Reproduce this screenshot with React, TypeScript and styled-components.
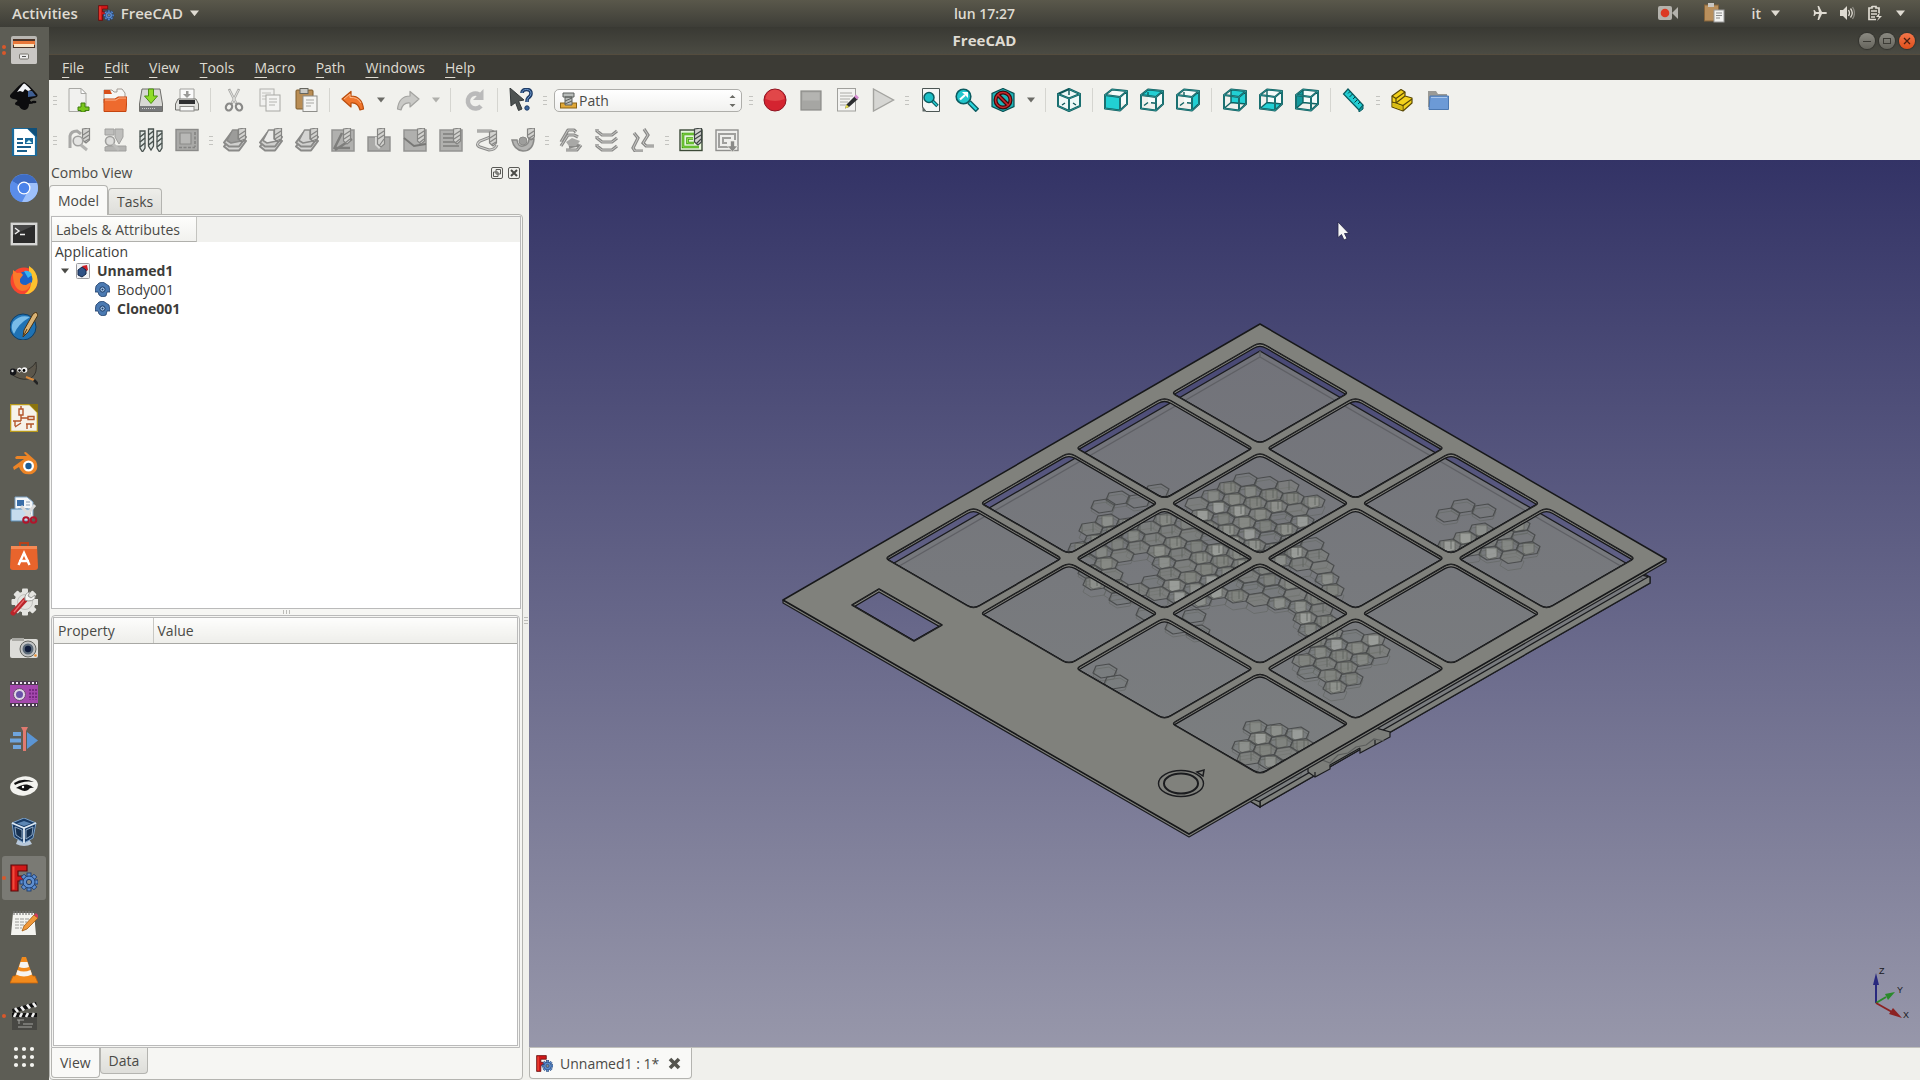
import React from "react";
import styled, { createGlobalStyle, css } from "styled-components";

const Global = createGlobalStyle`
  * { box-sizing: border-box; }
  html, body { margin: 0; padding: 0; height: 100%; }
  body {
    font-family: "Open Sans", "Noto Sans", sans-serif;
    font-size: 14px;
    line-height: 19px;
    color: #4a4a46;
    overflow: hidden;
  }
  button, select { font: inherit; color: inherit; }
  button { border: 0; padding: 0; background: none; }
`;

/* ---------- desktop shell ---------- */

const Desktop = styled.div`
  display: flex;
  flex-direction: column;
  height: 100vh;
  background: #f0f0ec;
`;

const TopBar = styled.header`
  display: grid;
  grid-template-columns: 49px 1fr auto 1fr;
  align-items: center;
  flex: none;
  height: 27px;
  padding-bottom: 1px;
  background: linear-gradient(#5a584b, #3d3d37);
  color: #dfdbd2;
`;

const TopLeft = styled.div`
  grid-column: 1 / 3;
  display: flex;
  align-items: center;
  gap: 20px;
  padding-left: 12px;
`;

const TopRight = styled.div`
  display: flex;
  align-items: center;
  justify-content: flex-end;
  padding-right: 15px;
`;

const TopItem = styled.button<{ $gap?: number; $right?: number; $large?: boolean }>`
  display: flex;
  align-items: center;
  gap: ${(p) => p.$gap ?? 7}px;
  margin-right: ${(p) => p.$right ?? 0}px;
  font-size: ${(p) => (p.$large ? 15 : 14)}px;
  font-weight: 600;
`;

const Main = styled.div`
  display: flex;
  flex: 1;
  min-height: 0;
`;

const Dock = styled.nav`
  display: flex;
  flex-direction: column;
  flex: none;
  width: 49px;
  background: #5d5d55;
`;

const DockItem = styled.button<{ $active?: boolean; $dots?: number }>`
  position: relative;
  display: flex;
  align-items: center;
  justify-content: center;
  flex: none;
  width: 44px;
  height: 44px;
  margin: 1px 3px 1px 2px;
  border-radius: 3px;
  background: ${(p) => (p.$active ? "#7a7a74" : "none")};
  &:last-child { height: 34px; }
  ${(p) =>
    p.$dots &&
    css`
      &::before {
        content: "";
        position: absolute;
        left: 0;
        top: ${p.$dots === 2 ? 17 : 20}px;
        width: 4px;
        height: 4px;
        border-radius: 2px;
        background: #d9582b;
        box-shadow: ${p.$dots === 2 ? "0 6px 0 #d9582b" : "none"};
      }
    `}
`;

const AppWindow = styled.div`
  display: flex;
  flex-direction: column;
  flex: 1;
  min-width: 0;
`;

const TitleBar = styled.div`
  display: grid;
  grid-template-columns: 1fr auto 1fr;
  align-items: center;
  flex: none;
  height: 28px;
  border-bottom: 1px solid #544c3e;
  background: linear-gradient(#393933, #4b4b43);
  color: #dfdbd2;
  font-size: 15px;
  font-weight: 700;
`;

const WindowButtons = styled.div`
  grid-column: 3;
  display: flex;
  justify-content: flex-end;
  gap: 4px;
  padding-right: 5px;
`;

const RoundButton = styled.button<{ $close?: boolean }>`
  display: flex;
  width: 16px;
  height: 16px;
  border-radius: 8px;
  background: ${(p) => (p.$close ? "linear-gradient(#f4764a, #df4f1b)" : "linear-gradient(#8b8a82, #66655d)")};
  box-shadow: 0 0 1px 1px #33332e;
`;

const MenuBar = styled.nav`
  display: flex;
  flex: none;
  height: 25px;
  padding-left: 3px;
  background: #3c3b35;
  color: #dfdbd2;
`;

const MenuButton = styled.button`
  padding: 0 10px;
  text-align: left;
`;

const Mnemonic = styled.u`
  text-underline-offset: 4px;
  text-decoration-thickness: 1px;
`;

const Tools = styled.div`
  flex: none;
  background: #f1f1ed;
`;

const ToolRow = styled.div`
  display: flex;
  align-items: center;
  height: 40px;
`;

const ToolButton = styled.button`
  display: flex;
  align-items: center;
  justify-content: center;
  flex: none;
  width: 36px;
  height: 36px;
`;

const DropButton = styled(ToolButton)`
  width: 19px;
`;

const Sep = styled.span`
  flex: none;
  width: 1px;
  height: 24px;
  margin: 0 5px;
  background: #d5d5d0;
`;

const Handle = styled.span`
  flex: none;
  width: 4px;
  height: 9px;
  margin: 0 4px;
  background: repeating-linear-gradient(#c4c4c0 0 1px, transparent 1px 4px);
`;

const Picker = styled.div`
  position: relative;
  display: flex;
  align-items: center;
  width: 188px;
  height: 23px;
  margin: 0 3px;
  border: 1px solid #aeaeaa;
  border-radius: 5px;
  background: linear-gradient(#ffffff, #f1f1ef);
  color: #4a4a46;
`;

const PickerIcon = styled.span`
  position: absolute;
  left: 5px;
  top: 2px;
  display: flex;
  pointer-events: none;
`;

const PickerArrows = styled(PickerIcon)`
  left: auto;
  right: 5px;
  top: 4px;
`;

const PickerSelect = styled.select`
  appearance: none;
  width: 100%;
  height: 100%;
  padding: 0 24px;
  border: 0;
  background: transparent;
`;

const Work = styled.div`
  display: flex;
  flex: 1;
  min-height: 0;
`;

/* ---------- combo view ---------- */

const Combo = styled.aside`
  display: flex;
  flex-direction: column;
  flex: none;
  width: 474px;
`;

const ComboTitle = styled.div`
  display: flex;
  align-items: center;
  height: 25px;
  padding: 0 3px 0 2px;
  flex: none;
`;

const Grow = styled.span`
  flex: 1;
`;

const MiniButton = styled.button`
  display: flex;
  margin-left: 5px;
`;

const Tabs = styled.div<{ $bottom?: boolean }>`
  display: flex;
  flex: none;
  align-items: ${(p) => (p.$bottom ? "flex-start" : "flex-end")};
  height: ${(p) => (p.$bottom ? 30 : 29)}px;
`;

const Tab = styled.button<{ $on?: boolean; $bottom?: boolean }>`
  height: ${(p) => (p.$on ? 30 : 26)}px;
  padding: 0 8px;
  border: 1px solid #b4b4b0;
  background: ${(p) => (p.$on ? "#f9f9f7" : "linear-gradient(#eeeeea, #dededa)")};
  ${(p) =>
    p.$bottom
      ? css`
          border-top: 0;
          border-radius: 0 0 4px 4px;
        `
      : css`
          border-bottom: 0;
          border-radius: 4px 4px 0 0;
        `}
  position: relative;
  margin-bottom: ${(p) => (p.$on && !p.$bottom ? -1 : 0)}px;
`;

const Pane = styled.div`
  display: flex;
  flex-direction: column;
  flex: 1;
  min-height: 0;
  border: 1px solid #b4b4b0;
  border-radius: 0 4px 4px 4px;
  background: #f6f6f3;
  padding: 1px;
`;

const Tree = styled.div`
  flex: none;
  height: 45.6%;
  border: 1px solid #bababa;
  background: #fff;
`;

const TreeHeader = styled.div`
  display: flex;
  height: 25px;
  background: #f1f1ee;
`;

const TreeHeading = styled.span`
  padding: 3px 16px 0 4px;
  border-right: 1px solid #c4c4c0;
  border-bottom: 1px solid #b0b0ac;
  background: linear-gradient(#fdfdfc, #f1f1ee);
`;

const TreeList = styled.ul`
  margin: 0;
  padding: 0 0 0 3px;
  list-style: none;
`;

const TreeRow = styled.li<{ $level: number; $bold?: boolean }>`
  display: flex;
  align-items: center;
  gap: 7px;
  height: 19px;
  padding-left: ${(p) => p.$level}px;
  font-weight: ${(p) => (p.$bold ? 700 : 400)};
  color: #3d3d3a;
`;

const Splitter = styled.div`
  flex: none;
  align-self: center;
  width: 7px;
  height: 4px;
  margin: 1px 0;
  background: repeating-linear-gradient(90deg, #bdbdb9 0 1px, transparent 1px 3px);
`;

const Props = styled.div`
  flex: 1;
  min-height: 0;
  padding: 1px;
  border: 1px solid #bababa;
  border-radius: 4px 4px 0 0;
  margin-right: 1px;
`;

const PropsInner = styled.div`
  height: 100%;
  border: 1px solid #bababa;
  background: #fff;
`;

const PropTable = styled.table`
  width: 100%;
  border-collapse: collapse;
  table-layout: fixed;
`;

const Th = styled.th<{ $w?: number }>`
  width: ${(p) => (p.$w ? `${p.$w}px` : "auto")};
  height: 25px;
  padding: 0 4px;
  text-align: left;
  font-weight: 400;
  border-bottom: 1px solid #a8a8a4;
  background: linear-gradient(#fdfdfc, #eeeeea);
  & + & { border-left: 1px solid #c8c8c4; }
`;

const VSplitter = styled.div`
  display: flex;
  align-items: center;
  flex: none;
  width: 6px;
  &::before {
    content: "";
    width: 4px;
    height: 7px;
    margin-left: 1px;
    background: repeating-linear-gradient(#bdbdb9 0 1px, transparent 1px 3px);
  }
`;

/* ---------- 3D view ---------- */

const Mdi = styled.main`
  display: flex;
  flex-direction: column;
  flex: 1;
  min-width: 0;
`;

const View3D = styled.div`
  position: relative;
  flex: 1;
  min-height: 0;
  background: linear-gradient(#333366, #9797aa);
`;

const Scene = styled.svg`
  display: block;
  width: 100%;
  height: 100%;
`;

const AxisCross = styled.svg`
  position: absolute;
  right: 0;
  bottom: 17px;
`;

const MdiTabs = styled.div`
  display: flex;
  flex: none;
  height: 33px;
  padding-bottom: 1px;
  border-top: 1px solid #c0c0bc;
`;

const MdiTab = styled.div`
  display: flex;
  align-items: center;
  gap: 9px;
  padding: 0 10px 0 6px;
  border: 1px solid #b4b4b0;
  border-top: 0;
  border-radius: 0 0 4px 4px;
  background: #f9f9f7;
`;

const PlainButton = styled.button`
  display: flex;
  align-items: center;
  gap: 7px;
`;

/* ---------- icons ---------- */

const FreeCadMark = ({ size }: { size: number }) => (
  <svg width={size} height={size} viewBox="0 0 28 28">
    <path d="M1 1h16v6H8v5h7v5H8v10H1z" fill="#d01818" stroke="#5c0a0a" strokeWidth="1.2" />
    <path d="M2.500 2.500h2v23h-2z" fill="#f04a3a" />
    <g transform="translate(19 18)">
      {[0, 45, 90, 135, 180, 225, 270, 315].map((a) => (
        <rect key={a} x="-2" y="-9" width="4" height="5" fill="#5e8fd0" stroke="#1c3c70" strokeWidth="0.900" transform={`rotate(${a})`} />
      ))}
      <circle r="6" fill="#5e8fd0" stroke="#1c3c70" strokeWidth="1" />
      <circle r="5" fill="#5e8fd0" />
      <circle r="2.600" fill="#8a8a84" stroke="#1c3c70" strokeWidth="1" />
    </g>
  </svg>
);

const dockArt: Record<string, React.ReactNode> = {
  Files: (
    <>
      <rect x="1" y="0" width="26" height="28" rx="2" fill="#b9b7b3" />
      <rect x="3" y="3" width="22" height="9" fill="#4b3428" />
      <path d="M3 5h22v4H3z" fill="#e8783a" />
      <path d="M4 8h20v3H4z" fill="#fbe4c4" />
      <rect x="1" y="12" width="26" height="16" rx="2" fill="#c9c7c4" />
      <rect x="9.500" y="18" width="9" height="5" rx="1" fill="#ededed" stroke="#77756f" />
      <path d="M12 20.500h4" stroke="#555" />
    </>
  ),
  Inkscape: (
    <>
      <path d="M14 0Q17 1 27 12Q29 15 24 16Q17 18 22 20Q25 22 19 22Q19 27 15 28Q11 28 9 24Q3 23 6 20Q10 18 3 17Q-2 15 1 12Q11 1 14 0z" fill="#0c0c0e" />
      <path d="M14 1.500Q16 2 21 8L18 9L15 7L13 10L10 9L7 10Q12 3 14 1.500z" fill="#f2f4f8" />
      <path d="M18 9l4 0l4 5l-8 1z" fill="#3f5f93" />
      <ellipse cx="24" cy="20" rx="2.500" ry="1.300" fill="#0c0c0e" />
    </>
  ),
  Writer: (
    <>
      <path d="M3 0h15l8 8v20H3z" fill="#fff" stroke="#1a6a9c" strokeWidth="2.200" />
      <path d="M17 0h10v9z" fill="#10507a" />
      <path d="M7 11h6M7 15h6M7 19h14M7 23h10" stroke="#1a5f8c" strokeWidth="1.800" />
      <rect x="15" y="10" width="8" height="6" fill="#1a6a9c" />
      <path d="M16 15l3-3l3 3z" fill="#dff" />
    </>
  ),
  Chromium: (
    <>
      <circle cx="14" cy="14" r="14" fill="#6d9cf0" />
      <path d="M14 14L2 7A14 14 0 0 1 27 9H14z" fill="#3e6cc4" />
      <path d="M14 14L2 7A14 14 0 0 0 12 28L17 19z" fill="#5a8dea" />
      <path d="M27 9A14 14 0 0 1 12 28L18 17L17 9z" fill="#9dc0fb" />
      <circle cx="14" cy="14" r="6.500" fill="#fff" />
      <circle cx="14" cy="14" r="5.200" fill="#4a83ea" />
    </>
  ),
  Terminal: (
    <>
      <rect x="0.500" y="2.500" width="27" height="23" rx="1" fill="#d6d6d4" stroke="#8c8c88" />
      <rect x="3" y="5" width="22" height="18" fill="#2b2b2b" />
      <path d="M3 5h22L3 15z" fill="#484848" />
      <path d="M5 8l4 3l-4 3M10 14.500h5" stroke="#eee" strokeWidth="1.400" fill="none" />
    </>
  ),
  Firefox: (
    <>
      <circle cx="14" cy="15" r="13.500" fill="#f8452f" />
      <path d="M19 0Q27 5 27.500 14A13.500 13.500 0 0 1 14 28.500Q24 22 19 12z" fill="#fdc22e" />
      <path d="M4 6Q7 8 11 7L14 12L8 22Q3 16 4 6z" fill="#e8304c" />
      <circle cx="15" cy="13" r="7.500" fill="#1d63c8" />
      <path d="M14 5Q20 4 22 9L18 12z" fill="#39b4f0" />
      <path d="M3 4l4 3Q12 6 13 9L10 13Q9 19 16 19L21 16Q20 25 12 25Q2 23 3 4z" fill="#fa7a2a" />
    </>
  ),
  Editor: (
    <>
      <circle cx="13" cy="15" r="13" fill="#1f72b4" stroke="#0f3e66" />
      <path d="M3 10Q10 2 20 5Q8 12 4 22Q0 16 3 10z" fill="#79bce8" />
      <path d="M26 0L28 3L18 20L13 25L14 18L23 2z" fill="#d9b274" stroke="#4a3314" strokeWidth="1" />
      <path d="M14 23l3-6" stroke="#4a3314" />
    </>
  ),
  Gimp: (
    <>
      <path d="M9 9Q14 13 19 11Q24 8 26 4Q28 16 21 20Q14 23 6 19Q2 18 2 14Q6 13 9 9z" fill="#5b564b" stroke="#2c2a25" strokeWidth="0.800" />
      <circle cx="3" cy="14" r="3.400" fill="#15161a" />
      <circle cx="2.500" cy="13" r="1.200" fill="#ddd" />
      <circle cx="9.500" cy="12" r="2.400" fill="#f4f4f4" />
      <circle cx="14.500" cy="12" r="2.800" fill="#f4f4f4" />
      <circle cx="9.500" cy="12.500" r="1.200" />
      <circle cx="14" cy="12.500" r="1.400" />
      <path d="M16 19l8 3" stroke="#d98a3c" strokeWidth="2" />
      <path d="M24 22l4 4" stroke="#222" strokeWidth="2.600" />
    </>
  ),
  Schematic: (
    <>
      <path d="M0 0h20l8 8v20H0z" fill="#f6f3ea" stroke="#b99a1c" strokeWidth="2.600" />
      <path d="M19 0h10v10z" fill="#8a7410" />
      <path d="M11 2v3M9 5h4v6H9zM11 11v6M11 14h7M18 12.500h6v3h-6zM3 17h8M5 17v5M11 19l-6 4M16 20h8M17 20v5M21 20v4" stroke="#b4562a" strokeWidth="1.400" fill="none" />
    </>
  ),
  Blender: (
    <>
      <path d="M3 17L14 9H6Q4 7 7 6H17L14 3Q15 1 17 3L26 11Q30 20 22 24Q12 26 9 17L4 20z" fill="#ec8426" />
      <circle cx="18.500" cy="16" r="5.500" fill="#fff" />
      <circle cx="18.500" cy="16" r="3.200" fill="#1d5c94" />
    </>
  ),
  Scanner: (
    <>
      <path d="M5 1h12l6 5v16H5z" fill="#f4f7fa" stroke="#7fa3c4" />
      <path d="M7 4h7v6H7z" fill="#3a6ea8" />
      <path d="M16 6h4M16 9h4M8 13h10" stroke="#8a9db0" />
      <path d="M1 13h19v12H1z" fill="#c6dcee" stroke="#5d8fb8" />
      <path d="M11 10L22 22M25 9L14 22" stroke="#dadada" strokeWidth="3" />
      <circle cx="16" cy="24" r="2.800" fill="none" stroke="#b0152c" strokeWidth="2" />
      <circle cx="23.500" cy="24" r="2.800" fill="none" stroke="#b0152c" strokeWidth="2" />
    </>
  ),
  Software: (
    <>
      <path d="M10 5V1h8v4" fill="none" stroke="#b5411a" strokeWidth="2" />
      <path d="M1 4h26l1 21q0 3-3 3H3q-3 0-3-3z" fill="#e8642c" />
      <path d="M1 4h26v3H1z" fill="#f58a55" />
      <path d="M8.500 23L14 11l5.500 12M9 19h10" stroke="#fff" strokeWidth="2.400" fill="none" />
    </>
  ),
  Settings: (
    <>
      <g transform="translate(15 14)">
        {[0, 45, 90, 135].map((a) => (
          <rect key={a} x="-3" y="-13.500" width="6" height="27" rx="1" fill="#e4e4e0" transform={`rotate(${a})`} />
        ))}
        <circle r="10.500" fill="#e4e4e0" />
        <circle r="7.500" fill="none" stroke="#c2c2be" />
      </g>
      <path d="M3 25L15 12" stroke="#b9242a" strokeWidth="5" strokeLinecap="round" />
      <path d="M4 24L14 12" stroke="#e8686a" strokeWidth="1.400" />
      <path d="M15 12Q14 5 20 4L18 8L21 10L25 7Q26 13 18 13z" fill="#f6f6f4" stroke="#9a9a96" />
    </>
  ),
  Camera: (
    <>
      <rect x="0" y="5" width="28" height="19" rx="2" fill="#dcdcd8" />
      <rect x="2" y="4" width="12" height="3" fill="#a9a9a4" />
      <circle cx="18" cy="15" r="8" fill="#c2c4c5" stroke="#62645f" />
      <circle cx="18" cy="15" r="5.500" fill="#5b6a78" />
      <circle cx="18" cy="15" r="3.200" fill="#0f1c3a" />
      <circle cx="25.500" cy="21.500" r="1.300" fill="#f09030" />
    </>
  ),
  Screencast: (
    <>
      <rect x="0" y="1" width="28" height="26" rx="1" fill="#a548ae" />
      <path d="M0 1h28v4H0zM0 23h28v4H0z" fill="#4a3a4e" />
      <path d="M2 3h25M2 25h25" stroke="#f0e6f2" strokeWidth="2" strokeDasharray="2 2" />
      <circle cx="9.500" cy="14.500" r="6" fill="#e0d6e4" stroke="#6b4a72" />
      <circle cx="9.500" cy="14.500" r="3.500" fill="#6a52a8" />
      <path d="M20 9v11M23 9v11M26 9v11" stroke="#74267e" strokeWidth="1.800" strokeDasharray="2 1.500" />
    </>
  ),
  VideoCutter: (
    <>
      <path d="M3 8h8M0 14.500h11M3 21h8" stroke="#6fa4dc" strokeWidth="4" />
      <path d="M17 6L28 14.500L17 23z" fill="#5b95d4" />
      <path d="M11 1h7l-2 4v20h-3V5z" fill="#e07a70" />
    </>
  ),
  Viewer: (
    <>
      <ellipse cx="14" cy="14" rx="14" ry="9.500" fill="#f2f2ee" transform="rotate(-8 14 14)" />
      <path d="M4 11Q13 5 24 10Q14 8 5 13z" fill="#111" />
      <path d="M6 16Q12 12 17 12.500Q21 13 24 16Q20 15 18 18Q14 20 10 17.500Q8 16 6 16z" fill="#111" />
      <circle cx="13" cy="15" r="1.200" fill="#fff" />
    </>
  ),
  VirtualBox: (
    <>
      <path d="M8 21h11l3 5q-8 4-16 0z" fill="#b8c8da" />
      <path d="M14 0L26 5L23 20L14 25L4 19L2 5z" fill="#1a3c66" stroke="#7aa0c8" strokeWidth="1" />
      <path d="M2 5l12 5L26 5M14 10v15" stroke="#dfeaf4" strokeWidth="1.800" fill="none" />
      <path d="M14 3l7 2.500L14 8L7 5.500z" fill="#5d87b4" />
      <path d="M5 9l7 3v9l-6-4zM23 9l-7 3v9l6-4z" fill="#16304f" stroke="#a8c2dc" strokeWidth="0.800" />
    </>
  ),
  TextEditor: (
    <>
      <path d="M3 3h21l2 22H1z" fill="#f4f4f0" />
      <path d="M4 1v4M7 1v4M10 1v4M13 1v4M16 1v4M19 1v4M22 1v4" stroke="#777" strokeWidth="1.200" />
      <path d="M5 9h14M5 12h12M5 15h9M5 18h7" stroke="#9a9a96" strokeDasharray="4 1" />
      <path d="M24 5L28 8L17 19L12 21L14 16z" fill="#f0983a" stroke="#a05a10" strokeWidth="0.800" />
      <path d="M24 5l4 3l1-2l-3-3z" fill="#d23a5a" />
    </>
  ),
  Vlc: (
    <>
      <path d="M3 20h22l3 7H0z" fill="#f28a1c" stroke="#c8640a" strokeWidth="0.800" />
      <path d="M12 1h4l7 20q-9 5-18 0z" fill="#f28a1c" />
      <path d="M10.500 6h7l1.500 5q-5 2-10 0zM7.500 14q6 3 13 0l1.500 4.500q-8 4-16 0z" fill="#f6f4f0" />
    </>
  ),
  Clapper: (
    <>
      <rect x="2" y="11" width="25" height="17" fill="#484844" />
      <path d="M2 7L26 0l1 4L3 11z" fill="#111" />
      <path d="M5 6l3 4M11 4.500l3 4M17 2.500l3 4M23 1l3 4" stroke="#f2f2f2" strokeWidth="2.600" />
      <path d="M2 11h25v4H2z" fill="#111" />
      <path d="M6 11l-2 4M12 11l-2 4M18 11l-2 4M24 11l-2 4" stroke="#f2f2f2" strokeWidth="2.600" />
      <path d="M7 18h7M9 18v4M13 22h10M8 25h14" stroke="#b0b0ac" strokeWidth="0.900" />
    </>
  ),
  Apps: (
    <>
      {[6, 14, 22].map((y) => [6, 14, 22].map((x) => <circle key={`${x}-${y}`} cx={x} cy={y} r="2.100" fill="#f4f4f0" />))}
    </>
  ),
};

const I = ({ children, size = 24 }: { children: React.ReactNode; size?: number }) => (
  <svg width={size} height={size} viewBox="0 0 24 24" fill="none" aria-hidden="true">
    {children}
  </svg>
);

const Down = ({ color = "#6b6b66", w = 8 }: { color?: string; w?: number }) => (
  <svg width={w} height={(w * 6) / 8} viewBox="0 0 8 6" aria-hidden="true">
    <path d="M0 0.500h8L4 5.500z" fill={color} />
  </svg>
);

const faces: Record<string, string> = {
  front: "M1 7L16 9V22.500L1 20.500Z",
  top: "M1 7L8 1.500L23 3L16 9Z",
  right: "M16 9L23 3V16L16 22.500Z",
  rear: "M8 1.500L23 3V16L8 14.500Z",
  bottom: "M1 20.500L8 14.500L23 16L16 22.500Z",
  left: "M1 7L8 1.500V14.500L1 20.500Z",
};

const Cube = ({ face }: { face: string }) => {
  const hidden = ["rear", "bottom", "left"].includes(face);
  const lines = "M1 7L16 9V22.500L1 20.500ZM1 7L8 1.500L23 3L16 9M23 3V16L16 22.500";
  return (
    <I>
      <path d={faces.rear} fill="#f4fbfa" />
      <path d={faces[face]} fill={face === "left" ? "#149a9e" : "#22d0d4"} />
      {face !== "front" && (
        <path d={hidden ? "M8 1.500V14.500L1 20.500M8 14.500L23 16" : "M8 4v4M8 14.500l-4 3M11 14.700l5 0.500"} stroke="#0e6262" strokeWidth="1.400" />
      )}
      <path d={lines} stroke="#0b5658" strokeWidth="2" strokeLinejoin="round" />
      <path d={lines} stroke="#3fb0ae" strokeWidth="0.600" />
    </I>
  );
};

const Bit = ({ x = 14, y = 0, h = 15, dark }: { x?: number; y?: number; h?: number; dark?: boolean }) => {
  const ink = dark ? "#3e4644" : "#858583";
  return (
    <g transform={`translate(${x} ${y})`}>
      <path d={`M0.500 1L7.500 0V${h - 3}L4 ${h}L0.500 ${h - 3}Z`} fill="#d2d2cf" stroke={ink} strokeWidth="1.200" />
      <path d={`M1 7L7 3M1 11L7 7M2 ${h - 1}L7 11`} stroke={ink} strokeWidth="1.200" />
    </g>
  );
};

const G = "#8a8a88";
const Slabs = ({ fill }: { fill: string }) => (
  <I>
    <path d="M1 18.500L8 9L23 13L16 22.500H6Z" fill="#d6d6d4" stroke={G} strokeWidth="2" strokeLinejoin="round" />
    <path d="M1 14.500L8 5L23 9L16 18.500H6Z" fill="#d0d0ce" stroke={G} strokeWidth="2" strokeLinejoin="round" />
    <path d="M4 12.500L9.500 2H15V11L18 13L8 15Z" fill={fill} stroke={G} strokeWidth="1.500" strokeLinejoin="round" />
    <Bit x={15} h={14} />
  </I>
);
const Block = ({ children, x = 14 }: { children: React.ReactNode; x?: number }) => (
  <I>
    <rect x="1" y="2" width="22" height="21" fill="#b0b0ae" stroke="#949492" strokeWidth="1.500" />
    {children}
    <Bit x={x} h={16} />
  </I>
);

const icons: Record<string, React.ReactNode> = {
  New: (
    <I>
      <path d="M2 0.500h12l5 5v18H2z" fill="#f1f1ef" stroke="#a8a8a4" />
      <path d="M14 0.500v5h5z" fill="#fff" stroke="#a8a8a4" />
      <path d="M14 15h4v4h4v3.500h-4V24h-4v-1.500h-3V19h3z" fill="#7ac61c" stroke="#3f7d0c" />
    </I>
  ),
  Open: (
    <I>
      <path d="M1 2h8l2 2h3V1h5l3 4v10H1z" fill="#f6f6f4" stroke="#a29b94" />
      <path d="M1 2h6l2 4H1z" fill="#d8501a" />
      <path d="M1 11h11l3-2h9l-1 14.500H1z" fill="#ee6a2e" stroke="#c5450f" />
      <path d="M2 12h11l3-2h7" stroke="#fbb48c" />
    </I>
  ),
  Save: (
    <I>
      <path d="M3 1h18l2.500 15v7.500H0.500V16z" fill="#d8d8d4" stroke="#6e6e6a" />
      <path d="M1 18h22v5H1z" fill="#77787a" />
      <path d="M3 20.500h14" stroke="#ccc" strokeDasharray="1 1" />
      <path d="M9.500 1h5v7h4L12 15.500L5.500 8h4z" fill="#8fdc28" stroke="#4a9010" />
    </I>
  ),
  Print: (
    <I>
      <path d="M5 1h14v11H5z" fill="#fafafa" stroke="#a0a09c" />
      <path d="M11 3h2.500v3h2.500l-4 4l-4-4h3z" fill="#9a9a98" />
      <path d="M3 11h18l2.500 5v6h-23v-6z" fill="#e2e2df" stroke="#70706c" />
      <rect x="4" y="12" width="16" height="4" fill="#2e2f31" />
      <rect x="5" y="18.500" width="14" height="4.500" fill="#f8f8f8" stroke="#8b8b88" />
    </I>
  ),
  Cut: (
    <I>
      <path d="M7 1L14.500 16M17 1L9.500 16" stroke="#a8a8a5" strokeWidth="2.600" />
      <path d="M7.500 2L14 15M16.500 2L10 15" stroke="#e4e4e1" strokeWidth="1" />
      <ellipse cx="7" cy="19" rx="3" ry="3.600" stroke="#8a8a88" strokeWidth="2.200" transform="rotate(25 7 19)" />
      <ellipse cx="17" cy="19" rx="3" ry="3.600" stroke="#8a8a88" strokeWidth="2.200" transform="rotate(-25 17 19)" />
    </I>
  ),
  Copy: (
    <I>
      <rect x="2" y="1" width="14" height="17" fill="#f1f1ef" stroke="#b0b0ac" />
      <path d="M4 5h9M4 8h9M4 11h5" stroke="#c2c2be" />
      <rect x="8" y="7" width="14" height="16" fill="#f4f4f2" stroke="#a8a8a4" />
      <path d="M11 11h8M11 14h8M11 17h6" stroke="#b4b4b0" />
    </I>
  ),
  Paste: (
    <I>
      <rect x="2" y="2" width="17" height="19" rx="1" fill="#b98d54" stroke="#7c5a2a" />
      <rect x="6" y="0.500" width="8" height="5" fill="#c9c9c5" stroke="#66665f" />
      <rect x="9" y="8" width="14" height="15.500" fill="#f4f4f2" stroke="#8e8e8a" />
      <path d="M12 12h8M12 15h8M12 18h5" stroke="#a8a8a4" />
    </I>
  ),
  Undo: (
    <I>
      <path d="M1 11L10 3.500V8Q21 8 22.500 21L19 22Q17 14 10 15V19Z" fill="#f0752c" stroke="#b84c0c" strokeWidth="1.200" strokeLinejoin="round" />
      <path d="M3 11L9 6V9.500Q17 9 20 15" stroke="#fcb98a" />
    </I>
  ),
  Redo: (
    <I>
      <path d="M23 11L14 3.500V8Q3 8 1.500 21L5 22Q7 14 14 15V19Z" fill="#c9c9c6" stroke="#a3a3a0" strokeWidth="1.200" strokeLinejoin="round" />
    </I>
  ),
  Refresh: (
    <I>
      <path d="M17 6.500A7.500 7.500 0 1 0 19 18" stroke="#bababa" strokeWidth="4.500" />
      <path d="M21.500 1v11H11z" fill="#bababa" />
    </I>
  ),
  WhatsThis: (
    <I>
      <path d="M1 0L15 12L9.500 13L13 21L9.500 22.500L6.500 14.500L2 18Z" fill="#4e5352" stroke="#34393a" />
      <path d="M13 5Q13 1.500 17.500 1.500Q22 1.500 22 5.500Q22 8 19 10Q18 11 18 14" stroke="#1f3c66" strokeWidth="3.600" />
      <path d="M13 5Q13 1.500 17.500 1.500Q22 1.500 22 5.500Q22 8 19 10Q18 11 18 14" stroke="#6d9ad0" strokeWidth="1" />
      <circle cx="18" cy="20" r="2.200" fill="#3a659c" stroke="#1f3c66" />
    </I>
  ),
  Record: (
    <I>
      <circle cx="12" cy="12" r="11" fill="#d42430" stroke="#8e1522" />
      <path d="M2.500 11A9.500 9.500 0 0 1 21.500 11Q12 15 2.500 11z" fill="#ee6a62" opacity="0.500" />
    </I>
  ),
  Stop: (
    <I>
      <rect x="2" y="3" width="20" height="19" fill="#a6a6a3" stroke="#8c8c89" strokeWidth="1.200" />
      <path d="M3.500 4.500h17v8h-17z" fill="#b4b4b1" />
    </I>
  ),
  Macros: (
    <I>
      <rect x="2.500" y="0.500" width="18" height="22.500" fill="#f3f3f1" stroke="#a0a09c" />
      <path d="M5 5h12M5 8h13M5 11h10M5 14h8M5 17h6" stroke="#aaaaa6" />
      <path d="M20 8L23 11L14 19L10 20.500L11.500 16.500Z" fill="#2c2d2f" />
      <path d="M19 8.500l2-2l3 3l-2 2z" fill="#d48ad0" />
      <path d="M10 20.500l1.500-4l2.500 2.500z" fill="#e8e04a" />
    </I>
  ),
  Play: (
    <I>
      <path d="M2.500 1L22.500 12L2.500 23Z" fill="#d6d6d3" stroke="#a4a4a0" strokeWidth="1.400" />
    </I>
  ),
  FitAll: (
    <I>
      <path d="M3.500 0.500h17v23H7l-3.500-4z" fill="#f4f6f5" stroke="#4c5654" />
      <path d="M3.500 18l4 5.500h-4z" fill="#5c6664" />
      <circle cx="10" cy="9.500" r="5" fill="#1bbfc6" stroke="#0a5b60" strokeWidth="1.500" />
      <path d="M13.500 13L18.500 18" stroke="#0a5b60" strokeWidth="3.600" />
      <path d="M14 13.500L18 17.500" stroke="#25d2d8" strokeWidth="1.400" />
    </I>
  ),
  FitSelection: (
    <I>
      <circle cx="8.500" cy="8.500" r="7.300" fill="#22c6cc" stroke="#0a5b60" strokeWidth="1.600" />
      <path d="M14 14L22.500 22.500" stroke="#0a5b60" strokeWidth="5" />
      <path d="M14.500 14.500L21.500 21.500" stroke="#2bd6dc" strokeWidth="2.400" />
      <path d="M5 11.500L10 7" stroke="#fff" strokeWidth="2.200" />
      <path d="M7 4h6v6z" fill="#fff" />
    </I>
  ),
  DrawStyle: (
    <I>
      <path d="M12 0.500L23 5.500V18.500L12 23.500L1 18.500V5.500Z" fill="#1eb4b8" stroke="#0a4f52" strokeWidth="1.200" />
      <circle cx="12" cy="12" r="7.500" stroke="#3c0a0c" strokeWidth="4" />
      <path d="M7 7L17 17" stroke="#3c0a0c" strokeWidth="4" />
      <circle cx="12" cy="12" r="7.500" stroke="#c8282c" strokeWidth="1.600" />
      <path d="M7 7L17 17" stroke="#c8282c" strokeWidth="1.600" />
    </I>
  ),
  Isometric: (
    <I>
      <path d="M12 1L23 6V18L12 23L1 18V6Z" fill="#eef8f7" stroke="#0b5658" strokeWidth="2" strokeLinejoin="round" />
      <path d="M1 6L12 10.500L23 6M12 10.500V23" stroke="#0b5658" strokeWidth="2" />
      <path d="M12 2v5M5 17l3-2M16 15l3 2" stroke="#0b5658" strokeWidth="1.400" />
      <path d="M12 1L23 6V18L12 23L1 18V6L12 10.500L23 6M12 10.500V23" stroke="#3fb0ae" strokeWidth="0.600" />
    </I>
  ),
  Measure: (
    <I>
      <path d="M6 1L21 17L17 22L1.500 6Z" fill="#22cdd2" stroke="#0a5b60" strokeWidth="1.200" />
      <path d="M21 17v4l-4 3v-2z" fill="#149a9e" stroke="#0a5b60" />
      <path d="M8 3.500l-2 2M10.500 6l-3 3M13 9l-2 2M15.500 11.500l-3 3M18 14l-2 2" stroke="#083f42" />
    </I>
  ),
  Part: (
    <I>
      <path d="M2 8L11 1.500L15 4V8L22 10V15L13 23L2 19Z" fill="#f3d21c" stroke="#5a4a06" strokeWidth="1.200" strokeLinejoin="round" />
      <path d="M2 8L6 10.500L15 4M6 10.500V15L2 14M6 15L15 8M6 15L13 17.500L22 11M13 17.500V23" stroke="#5a4a06" strokeWidth="1.200" />
      <path d="M2.500 15L12.500 18.500V22L2.500 18.500Z" fill="#d8bc14" />
    </I>
  ),
  Group: (
    <I>
      <path d="M2 3h8l2 3h9v13H2z" fill="#9a9a96" />
      <path d="M4 8h18.500v13.500H3z" fill="#6c9ad6" stroke="#4c78b0" />
      <path d="M5 9.500h16" stroke="#a8c6ec" />
    </I>
  ),
  Inspect: (
    <I>
      <path d="M3 20V8Q4 3 10 3L14 6" stroke="#a8a8a6" strokeWidth="3" />
      <Bit x={15} />
      <circle cx="11" cy="13" r="4.800" fill="#e4e4e2" stroke="#a0a09e" strokeWidth="1.600" />
      <path d="M14 17L20 22" stroke="#b4b4b2" strokeWidth="3" />
    </I>
  ),
  Simulator: (
    <I>
      <path d="M2 1h9v6H2zM12 1h8v8l-4 7l-4-7z" fill="#bebebc" stroke="#a0a09e" />
      <path d="M6 18h17v5H2v-4z" fill="#b4b4b2" stroke="#a0a09e" />
      <circle cx="7" cy="13" r="4.500" fill="#dededc" stroke="#a0a09e" strokeWidth="1.600" />
      <path d="M10 16l6 6" stroke="#bcbcba" strokeWidth="3" />
    </I>
  ),
  ToolLibrary: (
    <I>
      {[0.500, 9, 17.500].map((x, k) => (
        <g key={x} transform={`translate(${x} ${k === 1 ? 0 : 2})`}>
          <path d="M0.500 1h5v17l-2.500 4l-2.500-4z" fill="#dfe5e2" stroke="#49524f" strokeWidth="1.300" />
          <path d="M0.500 7l5-4M0.500 12l5-4M0.500 17l5-4" stroke="#49524f" strokeWidth="1.600" />
        </g>
      ))}
    </I>
  ),
  Job: (
    <I>
      <rect x="1" y="1.500" width="22" height="21" fill="#a9a9a7" stroke="#8b8b89" strokeWidth="1.400" />
      <path d="M5 5h11v11H5z" fill="#b8b8b6" stroke="#8b8b89" strokeWidth="1.200" />
      <path d="M20 4v15M4 19.500h16" stroke="#848482" strokeWidth="1.600" strokeDasharray="3 1.500" />
    </I>
  ),
  Profile: <Slabs fill="#9c9c9a" />,
  Pocket: <Slabs fill="#ececea" />,
  Adaptive: <Slabs fill="#d4d4d2" />,
  FaceProfile: (
    <Block x={12}>
      <path d="M3 21L11 5M5 20h14M4 22L21 11" stroke="#7e7e7c" strokeWidth="2.500" />
    </Block>
  ),
  Drilling: (
    <I>
      <path d="M1 9h22v14H1z" fill="#aaaaa8" stroke="#8f8f8d" strokeWidth="1.400" />
      <path d="M8 9h8v8l-4 4l-4-4z" fill="#d8d8d6" />
      <Bit x={10} h={19} />
    </I>
  ),
  Engrave: (
    <Block>
      <path d="M1 10L11 18L23 16" stroke="#777775" strokeWidth="1.800" />
    </Block>
  ),
  Face: (
    <Block>
      <path d="M4 6h10M4 10h10M4 14h14M4 18h16" stroke="#7e7e7c" strokeWidth="1.600" />
    </Block>
  ),
  Helix: (
    <I>
      <path d="M2 3H16Q22 4 18 8L5 13Q0 17 5 19L14 22Q20 22 22 17" stroke="#8a8a88" strokeWidth="3" />
      <path d="M2 3H16Q22 4 18 8L5 13Q0 17 5 19L14 22Q20 22 22 17" stroke="#cfcfcd" strokeWidth="1.200" />
      <Bit x={14} y={3} h={15} />
    </I>
  ),
  Surface: (
    <I>
      <path d="M1 12H6Q7 19 12 18Q18 17 18 11H23Q22 23 12 23Q3 22 1 12Z" fill="#b4b4b2" stroke={G} strokeWidth="1.500" />
      <circle cx="12" cy="13" r="4" fill="#9e9e9c" stroke={G} />
      <Bit x={16} h={12} />
    </I>
  ),
  DressupA: (
    <I>
      <path d="M2 14L9 2H15L17 4M2 18L9 7H15L19 9M7 22H18L22 17M10 19L20 17" stroke={G} strokeWidth="3.200" strokeLinejoin="round" />
      <path d="M2 14L9 2H15L17 4M2 18L9 7H15L19 9M7 22H18L22 17" stroke="#c4c4c2" strokeWidth="1" />
      <path d="M7 14L13 10L21 13L17 18L10 18Z" fill="#a8a8a6" />
    </I>
  ),
  DressupB: (
    <I>
      <path d="M2 1V3L7 7H17L22 3M2 8V10L7 14H17L22 10M2 16V18L7 22H17L22 18" stroke={G} strokeWidth="3.200" />
      <path d="M2 1V3L7 7H17L22 3M2 8V10L7 14H17L22 10M2 16V18L7 22H17L22 18" stroke="#c8c8c6" strokeWidth="1" />
    </I>
  ),
  DressupC: (
    <I>
      <path d="M3 5L7 10L2 20L4 23H12M13 1L17 7L12 15L15 18H23" stroke={G} strokeWidth="3.200" />
      <path d="M3 5L7 10L2 20L4 23H12M13 1L17 7L12 15L15 18H23" stroke="#c8c8c6" strokeWidth="1" />
    </I>
  ),
  PathJob: (
    <I>
      <rect x="1" y="2" width="22" height="20.500" fill="#e6f6da" stroke="#3c4a38" strokeWidth="1.400" />
      <path d="M20 19H4V6H15M15 15H8.500V10.500H14" stroke="#3f9a14" strokeWidth="2.600" />
      <path d="M20 19H4V6H15M15 15H8.500V10.500H14" stroke="#8fe04a" strokeWidth="1" />
      <Bit x={15} h={17} dark />
    </I>
  ),
  PathPost: (
    <I>
      <rect x="1" y="2" width="22" height="20.500" fill="#efefed" stroke="#8f8f8d" strokeWidth="1.400" />
      <path d="M14 19H4V6H20V12M12 15H8V10H16" stroke="#a0a09e" strokeWidth="2" />
      <path d="M15.500 13h4v5h3l-5 6l-5-6h3z" fill="#8a8a88" stroke="#f1f1ed" strokeWidth="0.600" />
    </I>
  ),
};

const PathIcon = () => (
  <svg width="17" height="17" viewBox="0 0 17 17" aria-hidden="true">
    <rect x="0.500" y="11" width="16" height="5" fill="#e0a838" stroke="#8a6214" />
    <path d="M3 1h11v4H3zM5 5h7v8H5z" fill="#b8bcba" stroke="#5c605e" />
    <path d="M5 9l7-3M5 12l7-3" stroke="#5c605e" />
  </svg>
);

const BodyIcon = () => (
  <svg width="15" height="15" viewBox="0 0 15 15" aria-hidden="true">
    <path d="M4 1L8 0L11 2L14 4L15 10L12 10L11 14L7 15L4 13L3 10L0 10L1 4Z" fill="#4b7ab2" stroke="#1e3e68" strokeWidth="0.800" />
    <circle cx="7.500" cy="7.500" r="2.600" fill="#a8c8ec" stroke="#1e3e68" />
    <circle cx="7.500" cy="7.500" r="1" fill="#1e3e68" />
  </svg>
);

const DocIcon = () => (
  <svg width="14" height="16" viewBox="0 0 14 16" aria-hidden="true">
    <rect x="0.500" y="0.500" width="13" height="15" rx="1" fill="#f1f2f5" stroke="#9a9a9e" />
    <path d="M6 3l5-1l1 5l-3 2z" fill="#cc1c24" />
    <path d="M2 7l4-3l4 3v4l-4 3l-4-2z" fill="#2f5286" stroke="#14284a" />
  </svg>
);

/* ---------- model ---------- */

type P = [number, number];

const holePath = (cx: number, cy: number) => {
  const w = 88;
  const h = 51;
  const c: P[] = [[cx, cy - h], [cx + w, cy], [cx, cy + h], [cx - w, cy]];
  const cut = [0.07, 0.035, 0.07, 0.035];
  const at = (a: P, b: P, t: number) => `${(a[0] + (b[0] - a[0]) * t).toFixed(1)} ${(a[1] + (b[1] - a[1]) * t).toFixed(1)}`;
  return (
    c
      .map((p, k) => {
        const prev = c[(k + 3) % 4];
        const next = c[(k + 1) % 4];
        return `${k ? "L" : "M"}${at(p, prev, cut[k])}Q${p[0]} ${p[1]} ${at(p, next, cut[k])}`;
      })
      .join("") + "Z"
  );
};

const slot = { d: "M879 589L942 625L914 641L852 605Z", below: "M879 592L942 628L914 644L852 608Z" };
const openings = [0, 1, 2, 3]
  .flatMap((i) =>
    [0, 1, 2, 3].map((j) => {
      const x = 1260 + 95.5 * (i - j);
      const y = 393 + 55.1 * (i + j);
      return { d: holePath(x, y), below: holePath(x, y + 2.6) };
    })
  )
  .concat(slot);
const plate = "M1260 324L1666 559L1189 834L783 600Z";

const regions: P[][] = [
  [[1190, 500], [1222, 482], [1245, 472], [1282, 480], [1330, 500], [1300, 530], [1332, 555], [1340, 600], [1310, 575], [1240, 560], [1170, 530], [1195, 508]],
  [[1072, 545], [1095, 522], [1165, 515], [1210, 540], [1260, 560], [1320, 595], [1345, 630], [1310, 650], [1290, 612], [1240, 602], [1190, 606], [1130, 590], [1122, 602], [1095, 588]],
  [[1300, 650], [1318, 625], [1370, 632], [1392, 642], [1362, 668], [1350, 695], [1325, 692], [1298, 668]],
  [[1228, 745], [1262, 722], [1318, 736], [1290, 768], [1245, 768]],
  [[1445, 545], [1465, 525], [1530, 525], [1532, 552], [1500, 560], [1460, 553]],
];
const cavities: P[][] = [
  [[1122, 560], [1140, 552], [1152, 572], [1150, 590], [1128, 582]],
];
const loners: P[] = [
  [1103, 506], [1118, 498], [1138, 501], [1157, 491],
  [1448, 515], [1463, 506], [1484, 511],
  [1105, 671], [1116, 682],
  [1148, 613], [1177, 627], [1194, 616], [1198, 632],
];

const inside = ([x, y]: P, poly: P[]) => {
  let hit = false;
  for (let a = 0, b = poly.length - 1; a < poly.length; b = a++) {
    const [xa, ya] = poly[a];
    const [xb, yb] = poly[b];
    if (ya > y !== yb > y && x < ((xb - xa) * (y - ya)) / (yb - ya) + xa) hit = !hit;
  }
  return hit;
};

const corner: P[] = [[9, 5], [-4, 7], [-12, 2], [-9, -5], [4, -7], [12, -2]];
const noise = (a: number, b: number) => {
  const v = Math.sin(a * 127.1 + b * 311.7) * 43758.5453;
  return v - Math.floor(v);
};

const cells: { x: number; y: number; n: number; m: number }[] = loners.map(([x, y]) => ({ x, y, n: 0.1, m: 0 }));
for (let a = -30; a < 40; a++) {
  for (let b = -40; b < 50; b++) {
    const x = 1245 + 21 * a - 16 * b;
    const y = 480 + 3.5 * a + 8 * b;
    if (regions.some((r) => inside([x, y], r)) && !cavities.some((r) => inside([x, y], r)))
      cells.push({ x, y, n: noise(a, b), m: noise(b, a + 9) });
  }
}
cells.sort((p, q) => p.y - q.y);
const hex = (x: number, y: number) => "M" + corner.map(([dx, dy]) => `${x + dx} ${y + dy}`).join("L") + "Z";
const wallShades = ["#83867f", "#8c8f88", "#979a93", "#a9aca8"];

const Model = () => (
  <Scene viewBox="529 160 1391 887" preserveAspectRatio="xMidYMid meet" role="img" aria-label="3D model">
    <defs>
      <linearGradient id="glass" x1="0" y1="0" x2="0" y2="1">
        <stop offset="0" stopColor="#72737a" />
        <stop offset="1" stopColor="#7c7f80" />
      </linearGradient>
      {openings.map((o, k) => (
        <clipPath id={`opening${k}`} key={k}>
          <path d={o.d} />
        </clipPath>
      ))}
    </defs>

    <path d="M1260 351L1650 577V583L1260 807L870 577Z" fill="url(#glass)" stroke="#1b1c1f" strokeWidth="1.300" />
    <path d="M870 583L1260 357L1650 583M1260 351V357" fill="none" stroke="#5f6065" strokeWidth="1.300" />
    {cells.map((c, k) => (
      <g key={k} strokeLinejoin="round">
        <path d={hex(c.x, c.y + (c.n > 0.5 ? 7 : 3))} fill="none" stroke="#5f625f" strokeWidth="1" opacity="0.550" />
        <path d={hex(c.x, c.y)} fill="#83867f" fillOpacity={c.n > 0.4 ? 0.45 : 0.1} />
        {c.m > 0.3 && (
          <path
            d={`M${c.x - 5} ${c.y - 5}h11v9l-8 2l-3-2z`}
            fill={wallShades[Math.floor((c.m - 0.3) * 5.7)]}
            fillOpacity="0.650"
            stroke="#62655f"
            strokeWidth="0.800"
          />
        )}
        {c.n > 0.6 && <path d={`M${c.x + 2} ${c.y - 6}v9M${c.x - 9} ${c.y - 4}v7`} fill="none" stroke="#5c5f5c" strokeWidth="0.800" />}
        <path d={hex(c.x, c.y)} fill="none" stroke="#4b4d4e" strokeWidth="1.200" />
      </g>
    ))}

    <path d="M1642 575L1650 577V583L1260 807V801L1648 577" fill="#7e807c" stroke="#1b1c1f" strokeWidth="1.300" />
    <path d="M1250 798L1260 802V807L1248 800" fill="#7e807c" stroke="#1b1c1f" strokeWidth="1.300" />
    <path d="M1360 748V753L1390 737V732L1372 727L1308 763V772L1315 777L1330 769V765L1360 748M1375 740V745M1315 772V777" fill="#7c7e7a" stroke="#1b1c1f" strokeWidth="1.200" />
    <path d="M1312 764l10-4l8 3l8-8l10-2l8-6l10-2l8-6l10 2" fill="none" stroke="#5b5d5c" strokeWidth="1.200" />

    <path d="M783 600L1189 834L1666 559V562L1189 837L783 603Z" fill="#7c7d78" stroke="#1b1c1f" strokeWidth="1.200" strokeLinejoin="round" />
    <path d={plate + openings.map((o) => o.d).join("")} fillRule="evenodd" fill="#80817c" stroke="#17181a" strokeWidth="1.500" strokeLinejoin="round" />
    {openings.map((o, k) => (
      <g key={k} clipPath={`url(#opening${k})`}>
        <path d={o.d + o.below} fill="#85857f" fillRule="evenodd" />
        <path d={o.below} fill="none" stroke="#17181a" strokeWidth="1.300" />
        <path d={o.d} fill="none" stroke="#17181a" strokeWidth="1.500" />
      </g>
    ))}

    <g fill="none" stroke="#1b1c1f">
      <ellipse cx="1181" cy="783.500" rx="22.500" ry="13" strokeWidth="1.400" />
      <ellipse cx="1181" cy="783.500" rx="17" ry="10" strokeWidth="2" />
      <path d="M1197 772L1204 770L1203 776Z" strokeWidth="1.500" />
    </g>

    <path d="M1338 222V237.500L1341.500 234.500L1344 240L1347 238.500L1344.500 233.500H1349Z" fill="#f6f6f6" stroke="#26264a" strokeWidth="0.800" />
  </Scene>
);

const Axes = () => (
  <AxisCross width="60" height="70" viewBox="1860 960 60 70" role="img" aria-label="Axis cross">
    <path d="M1876 1003V984" stroke="#28287e" strokeWidth="2" />
    <path d="M1876 973L1879 985H1873Z" fill="#28287e" />
    <path d="M1876 1003L1886 997" stroke="#2a8a2a" strokeWidth="2" />
    <path d="M1895 992L1885 994L1888 1000Z" fill="#2a8a2a" />
    <path d="M1876 1003L1892 1012" stroke="#8c2222" strokeWidth="2" />
    <path d="M1902 1018L1889 1014L1893 1008Z" fill="#8c2222" />
    <g fill="#18181c" fontFamily="Liberation Sans, sans-serif" fontSize="9">
      <text x="1879" y="974">Z</text>
      <text x="1897" y="993">Y</text>
      <text x="1903" y="1018">X</text>
    </g>
  </AxisCross>
);

/* ---------- data ---------- */

const menus = ["File", "Edit", "View", "Tools", "Macro", "Path", "Windows", "Help"];

const dockItems: [string, number?][] = [
  ["Files", 2], ["Inkscape"], ["Writer"], ["Chromium"], ["Terminal"], ["Firefox"], ["Editor"], ["Gimp"],
  ["Schematic"], ["Blender"], ["Scanner"], ["Software"], ["Settings"], ["Camera"], ["Screencast"],
  ["VideoCutter"], ["Viewer"], ["VirtualBox"], ["FreeCAD", 1], ["TextEditor"], ["Vlc"], ["Clapper", 1], ["Apps"],
];

const rowOneA = ["#", "New", "Open", "Save", "Print", "|", "Cut", "Copy", "Paste", "|", "Undo", "v", "Redo", "vv", "|", "Refresh", "|", "WhatsThis", "#"];
const rowOneB = [
  "#", "Record", "Stop", "Macros", "Play", "#", "FitAll", "FitSelection", "DrawStyle", "v", "|", "Isometric", "|",
  "cube:front", "cube:top", "cube:right", "|", "cube:rear", "cube:bottom", "cube:left", "|", "Measure", "#", "Part", "Group",
];
const rowTwo = [
  "#", "Inspect", "Simulator", "ToolLibrary", "Job", "#", "Profile", "Pocket", "Adaptive", "FaceProfile", "Drilling",
  "Engrave", "Face", "Helix", "Surface", "#", "DressupA", "DressupB", "DressupC", "#", "PathJob", "PathPost",
];

const ToolItems = ({ items }: { items: string[] }) => (
  <>
    {items.map((t, k) => {
      if (t === "#") return <Handle key={k} />;
      if (t === "|") return <Sep key={k} />;
      if (t === "v" || t === "vv")
        return (
          <DropButton key={k} aria-label="More">
            <Down color={t === "v" ? "#6b6b66" : "#b0b0ac"} />
          </DropButton>
        );
      if (t.startsWith("cube:"))
        return (
          <ToolButton key={k} aria-label={`${t.slice(5)} view`}>
            <Cube face={t.slice(5)} />
          </ToolButton>
        );
      return (
        <ToolButton key={k} aria-label={t}>
          {icons[t]}
        </ToolButton>
      );
    })}
  </>
);

export default function App() {
  return (
    <Desktop>
      <Global />
      <TopBar>
        <TopLeft>
          <TopItem $large>Activities</TopItem>
          <TopItem $large>
            <FreeCadMark size={16} />
            FreeCAD
            <Down color="#dfdbd2" w={9} />
          </TopItem>
        </TopLeft>
        <TopItem>lun 17:27</TopItem>
        <TopRight>
          <TopItem $right={25} aria-label="Recorder">
            <svg width="21" height="16" viewBox="0 0 21 16">
              <rect x="0" y="1" width="14" height="14" rx="2" fill="#b4b2ac" />
              <path d="M14 8l6-6v12z" fill="#b4b2ac" />
              <circle cx="7" cy="8" r="4.300" fill="#dc3a24" />
            </svg>
          </TopItem>
          <TopItem $right={27} aria-label="Clipboard">
            <svg width="21" height="20" viewBox="0 0 21 20">
              <rect x="0.500" y="2" width="14" height="16" fill="#b98f5c" stroke="#86643a" />
              <rect x="4" y="0" width="6" height="4" fill="#c8c6c2" />
              <rect x="10" y="7" width="10" height="12" fill="#f2f2f0" stroke="#999" />
              <path d="M12 10h6M12 12.500h6M12 15h4" stroke="#888" />
            </svg>
          </TopItem>
          <TopItem $gap={10} $right={33}>
            it
            <Down color="#dfdbd2" w={9} />
          </TopItem>
          <TopItem $gap={13} aria-label="System">
            <svg width="14" height="14" viewBox="0 0 14 14">
              <path d="M14 7q0 1-1.500 1H9L6 14H4.500L6 8H3L1.500 10H0.500L1 7L0.500 4h1L3 6h3L4.500 0H6l3 6h3.500Q14 6 14 7z" fill="#dfdbd2" />
            </svg>
            <svg width="15" height="14" viewBox="0 0 15 14">
              <path d="M0 4h3l4-4v14l-4-4H0z" fill="#dfdbd2" />
              <path d="M8.500 4q2 3 0 6M10.500 2.500q3.500 4.500 0 9" stroke="#dfdbd2" strokeWidth="1.300" fill="none" />
              <path d="M12.500 1q4 6 0 12" stroke="#8a8880" strokeWidth="1.300" fill="none" />
            </svg>
            <svg width="15" height="16" viewBox="0 0 15 16">
              <path d="M4 1.500h4v1.500h3v5M8 14.500H1V3h3V1" stroke="#dfdbd2" strokeWidth="1.700" fill="none" />
              <path d="M3 6h6M3 9h6M3 12h4" stroke="#dfdbd2" strokeWidth="1.300" />
              <path d="M12 7l-4 5h3l-2 4l5-5h-3z" fill="#dfdbd2" />
            </svg>
            <Down color="#dfdbd2" w={9} />
          </TopItem>
        </TopRight>
      </TopBar>

      <Main>
        <Dock aria-label="Dock">
          {dockItems.map(([name, dots]) => (
            <DockItem key={name} aria-label={name} $dots={dots} $active={name === "FreeCAD"}>
              {name === "FreeCAD" ? (
                <FreeCadMark size={28} />
              ) : (
                <svg width="28" height="28" viewBox="0 0 28 28">
                  {dockArt[name]}
                </svg>
              )}
            </DockItem>
          ))}
        </Dock>

        <AppWindow>
          <TitleBar>
            <span />
            <span>FreeCAD</span>
            <WindowButtons>
              <RoundButton aria-label="Minimise">
                <svg width="16" height="16"><path d="M4 8.500h8" stroke="#3c3b35" /></svg>
              </RoundButton>
              <RoundButton aria-label="Maximise">
                <svg width="16" height="16"><rect x="4.500" y="5.500" width="7" height="5" fill="none" stroke="#3c3b35" /></svg>
              </RoundButton>
              <RoundButton aria-label="Close" $close>
                <svg width="16" height="16"><path d="M5 5l6 6M11 5l-6 6" stroke="#4a1f10" strokeWidth="1.300" /></svg>
              </RoundButton>
            </WindowButtons>
          </TitleBar>
          <MenuBar>
            {menus.map((m) => (
              <MenuButton key={m}>
                <Mnemonic>{m[0]}</Mnemonic>
                {m.slice(1)}
              </MenuButton>
            ))}
          </MenuBar>
          <Tools>
            <ToolRow>
              <ToolItems items={rowOneA} />
              <Picker>
                <PickerIcon>
                  <PathIcon />
                </PickerIcon>
                <PickerSelect aria-label="Workbench" defaultValue="Path">
                  <option>Path</option>
                </PickerSelect>
                <PickerArrows>
                  <svg width="7" height="14" viewBox="0 0 7 14">
                    <path d="M0.500 4h6L3.500 1zM0.500 10h6l-3 3z" fill="#6b6b66" />
                  </svg>
                </PickerArrows>
              </Picker>
              <ToolItems items={rowOneB} />
            </ToolRow>
            <ToolRow>
              <ToolItems items={rowTwo} />
            </ToolRow>
          </Tools>

          <Work>
            <Combo>
              <ComboTitle>
                Combo View
                <Grow />
                <MiniButton aria-label="Float">
                  <svg width="12" height="12" viewBox="0 0 12 12">
                    <rect x="0.500" y="0.500" width="11" height="11" rx="1.500" fill="none" stroke="#5a5a56" />
                    <path d="M5 2.500h4.500V7H5zM2.500 5H7v4.500H2.500z" fill="#f1f1ed" stroke="#5a5a56" />
                  </svg>
                </MiniButton>
                <MiniButton aria-label="Close panel">
                  <svg width="12" height="12" viewBox="0 0 12 12">
                    <rect x="0.500" y="0.500" width="11" height="11" rx="1.500" fill="none" stroke="#5a5a56" />
                    <path d="M3 3l6 6M9 3l-6 6" stroke="#4a4a46" strokeWidth="2" />
                  </svg>
                </MiniButton>
              </ComboTitle>
              <Tabs role="tablist">
                <Tab role="tab" $on>Model</Tab>
                <Tab role="tab">Tasks</Tab>
              </Tabs>
              <Pane>
                <Tree>
                  <TreeHeader>
                    <TreeHeading>Labels &amp; Attributes</TreeHeading>
                  </TreeHeader>
                  <TreeList>
                    <TreeRow $level={0}>Application</TreeRow>
                    <TreeRow $level={6} $bold>
                      <Down color="#4a4a46" />
                      <DocIcon />
                      Unnamed1
                    </TreeRow>
                    <TreeRow $level={40}>
                      <BodyIcon />
                      Body001
                    </TreeRow>
                    <TreeRow $level={40} $bold>
                      <BodyIcon />
                      Clone001
                    </TreeRow>
                  </TreeList>
                </Tree>
                <Splitter />
                <Props>
                  <PropsInner>
                    <PropTable>
                      <thead>
                        <tr>
                          <Th $w={99}>Property</Th>
                          <Th>Value</Th>
                        </tr>
                      </thead>
                    </PropTable>
                  </PropsInner>
                </Props>
                <Tabs role="tablist" $bottom>
                  <Tab role="tab" $on $bottom>View</Tab>
                  <Tab role="tab" $bottom>Data</Tab>
                </Tabs>
              </Pane>
            </Combo>
            <VSplitter />
            <Mdi>
              <View3D>
                <Model />
                <Axes />
              </View3D>
              <MdiTabs>
                <MdiTab>
                  <PlainButton>
                    <FreeCadMark size={17} />
                    Unnamed1 : 1*
                  </PlainButton>
                  <PlainButton aria-label="Close document">
                    <svg width="13" height="13" viewBox="0 0 13 13">
                      <path d="M2 2l9 9M11 2l-9 9" stroke="#55554f" strokeWidth="3.600" />
                    </svg>
                  </PlainButton>
                </MdiTab>
              </MdiTabs>
            </Mdi>
          </Work>
        </AppWindow>
      </Main>
    </Desktop>
  );
}
